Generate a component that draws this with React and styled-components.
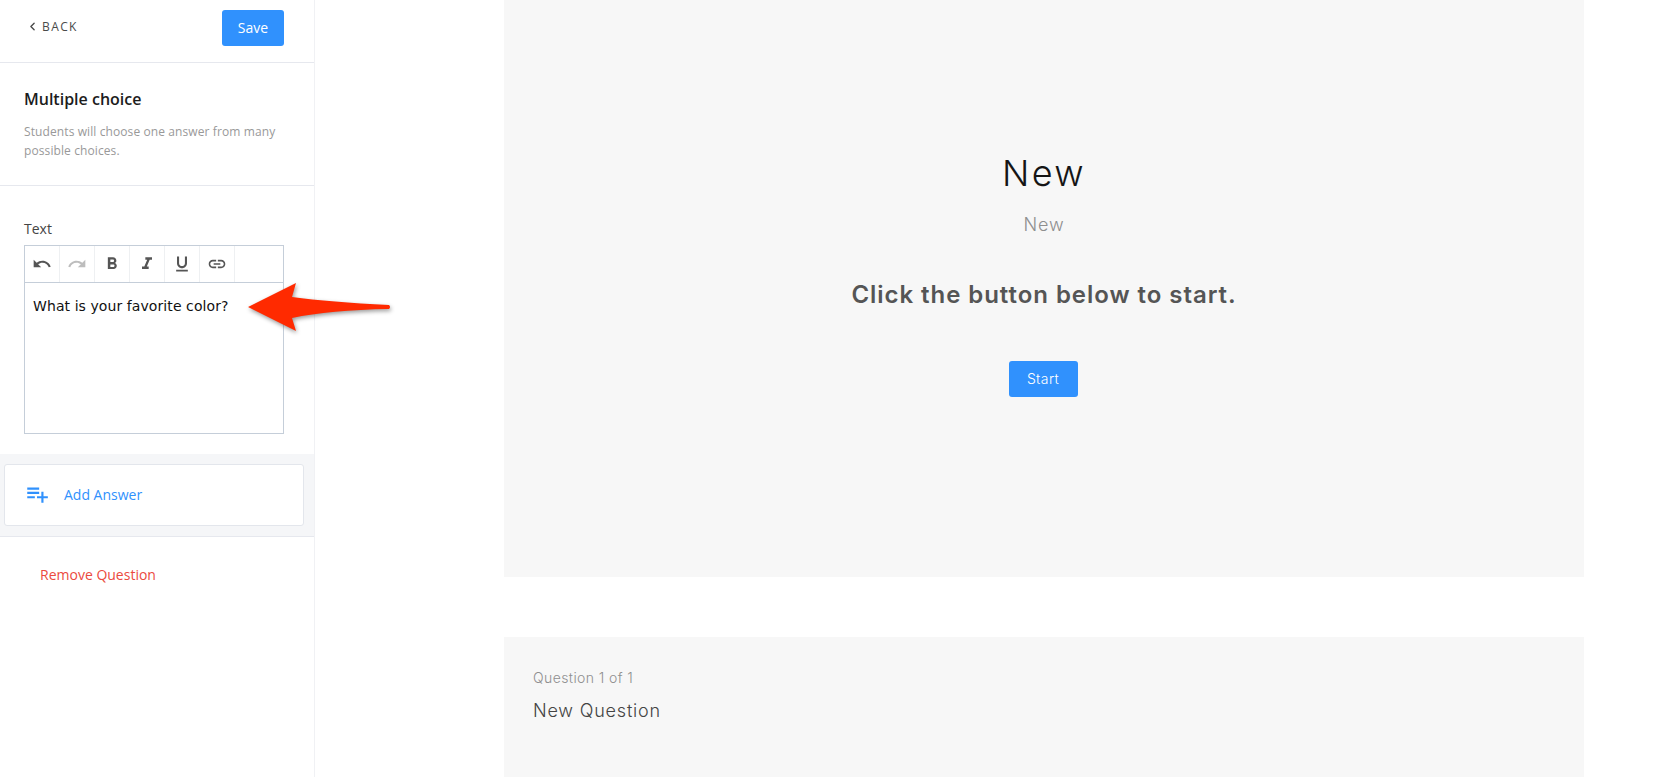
import React from 'react';
import styled, { createGlobalStyle } from 'styled-components';
import { ChevronLeft } from 'lucide-react';
import { MdUndo, MdRedo, MdFormatBold, MdFormatItalic, MdFormatUnderlined, MdLink, MdPlaylistAdd } from 'react-icons/md';

const Global = createGlobalStyle`
  html, body { margin: 0; padding: 0; background: #fff; height: 777px; overflow: hidden; }
  * { box-sizing: border-box; }
`;
const Page = styled.div`
  display: flex; width: 1656px; height: 777px; overflow: hidden; position: relative;
  font-family: "Open Sans", "Noto Sans", sans-serif;
`;
const Sidebar = styled.aside`
  width: 315px; flex: none; height: 777px; border-right: 1px solid #f0f1f4; background: #fff;
`;
const TopBar = styled.div`
  height: 63px; padding: 10px 30px 0 26px; display: flex; justify-content: space-between; align-items: flex-start;
  border-bottom: 1px solid #e6e8ee;
`;
const BackLink = styled.a`
  display: flex; align-items: center; gap: 3px; margin-top: 7px; height: 18px;
  font-size: 12px; letter-spacing: 1.4px; color: #4a4a4a; font-weight: 400;
`;
const PrimaryButton = styled.button`
  border: 0; border-radius: 3px; background: #3091fd; color: #fff; font-family: inherit; font-size: 14px;
  font-weight: ${p => p.$weight || 400};
  display: flex; align-items: center; justify-content: center; padding: 0 0 2px;
  width: ${p => p.$w}px; height: 36px; ${p => p.$ls ? `letter-spacing: ${p.$ls}px;` : ''}
`;
const Intro = styled.div`
  height: 123px; padding: 24px 24px 0; border-bottom: 1px solid #e6e8ee;
`;
const IntroTitle = styled.h2`
  margin: 0; font-size: 16px; line-height: 24px; font-weight: 600; color: #1c1c1c;
`;
const IntroText = styled.p`
  margin: 11px 0 0; font-size: 12px; line-height: 19px; color: #999; letter-spacing: 0.1px;
`;
const TextSection = styled.div`
  height: 268px; padding: 34px 30px 0 24px;
`;
const Label = styled.div`
  font-size: 14px; line-height: 18px; color: #444; margin-bottom: 7px;
`;
const Editor = styled.div`
  width: 260px; height: 189px; border: 1px solid #c5ced9; display: flex; flex-direction: column;
`;
const Toolbar = styled.div`
  height: 37px; flex: none; display: flex; border-bottom: 1px solid #c5ced9;
`;
const ToolButton = styled.span`
  width: 35px; height: 36px; border-right: 1px solid #eef0f2; display: flex; align-items: center; justify-content: center;
  color: ${p => p.$muted ? '#bdbdbd' : '#555'}; font-size: 20px;
`;
const EditorBody = styled.div`
  padding: 14px 8px; font-family: "DejaVu Sans", sans-serif; font-size: 14px; line-height: 18px; color: #111;
  letter-spacing: 0.08px;
`;
const AnswerTray = styled.div`
  height: 83px; padding: 10px 10px 10px 4px; background: #f5f6f8; border-bottom: 1px solid #e6e8ee;
`;
const AddCard = styled.div`
  height: 62px; background: #fff; border: 1px solid #e3e6ec; border-radius: 3px;
  display: flex; align-items: center; padding: 0 0 2px 19px; gap: 14px; color: #3091fd; font-size: 14px;
`;
const RemoveLink = styled.a`
  display: block; margin: 28px 0 0 40px; font-size: 14px; line-height: 20px; color: #eb4a3e;
`;
const Main = styled.main`
  flex: 1; padding-left: 189px; display: flex; flex-direction: column; gap: 60px;
  font-family: Inter, "Open Sans", sans-serif;
`;
const Cover = styled.section`
  width: 1080px; height: 577px; flex: none; background: #f7f7f7; display: flex; flex-direction: column; align-items: center;
  padding-top: 150px;
`;
const CoverTitle = styled.h1`
  margin: 0; font-size: 36px; line-height: 46px; font-weight: 300; color: #151515; letter-spacing: 2.4px;
`;
const CoverSub = styled.div`
  margin-top: 17px; font-size: 18px; line-height: 24px; font-weight: 300; color: #8f8f8f; letter-spacing: 0.9px;
`;
const CoverPrompt = styled.div`
  margin-top: 42px; font-size: 24px; line-height: 32px; font-weight: 600; color: #555; letter-spacing: 0.95px;
`;
const CoverAction = styled.div`
  margin: 50px 2px 0 0;
`;
const QuestionCard = styled.section`
  width: 1080px; height: 140px; flex: none; background: #f7f7f7; padding: 32px 29px 0;
`;
const QuestionCount = styled.div`
  font-size: 14px; line-height: 18px; font-weight: 300; color: #8f8f8f; letter-spacing: 0.4px;
`;
const QuestionTitle = styled.div`
  margin-top: 11px; font-size: 18px; line-height: 26px; font-weight: 300; color: #444; letter-spacing: 0.8px;
`;
const Arrow = styled.svg`
  position: absolute; left: 240px; top: 275px; overflow: visible;
  filter: drop-shadow(1px 2px 2px rgba(0,0,0,.4));
`;

export default function App() {
  return (
    <Page>
      <Global />
      <Sidebar>
        <TopBar>
          <BackLink><ChevronLeft size={13} strokeWidth={2.5} />BACK</BackLink>
          <PrimaryButton $w={62}>Save</PrimaryButton>
        </TopBar>
        <Intro>
          <IntroTitle>Multiple choice</IntroTitle>
          <IntroText>Students will choose one answer from many possible choices.</IntroText>
        </Intro>
        <TextSection>
          <Label>Text</Label>
          <Editor>
            <Toolbar>
              <ToolButton><MdUndo /></ToolButton>
              <ToolButton $muted><MdRedo /></ToolButton>
              <ToolButton><MdFormatBold /></ToolButton>
              <ToolButton><MdFormatItalic /></ToolButton>
              <ToolButton><MdFormatUnderlined /></ToolButton>
              <ToolButton><MdLink /></ToolButton>
            </Toolbar>
            <EditorBody>What is your favorite color?</EditorBody>
          </Editor>
        </TextSection>
        <AnswerTray>
          <AddCard><MdPlaylistAdd size={26} />Add Answer</AddCard>
        </AnswerTray>
        <RemoveLink>Remove Question</RemoveLink>
      </Sidebar>
      <Main>
        <Cover>
          <CoverTitle>New</CoverTitle>
          <CoverSub>New</CoverSub>
          <CoverPrompt>Click the button below to start.</CoverPrompt>
          <CoverAction><PrimaryButton $w={69} $ls={0.4} $weight={300}>Start</PrimaryButton></CoverAction>
        </Cover>
        <QuestionCard>
          <QuestionCount>Question 1 of 1</QuestionCount>
          <QuestionTitle>New Question</QuestionTitle>
        </QuestionCard>
      </Main>
      <Arrow width="152" height="60" viewBox="0 0 152 60">
        <path d="M8 32 L56 8 L52 22 Q90 27 149 30 Q151 32 149 34 Q90 35 52 43 L56 56 Z" fill="#ff2a00" />
      </Arrow>
    </Page>
  );
}
